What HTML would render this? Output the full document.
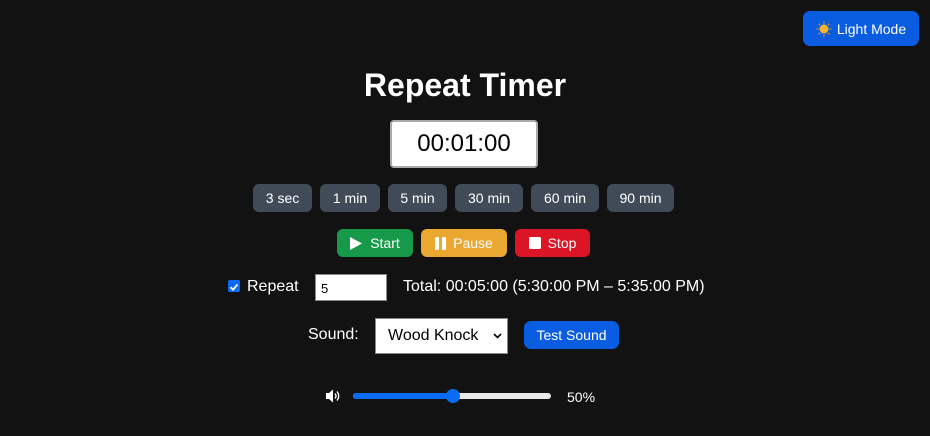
<!DOCTYPE html>
<html><head><style>
body{margin:0;width:930px;height:436px;background:#121212;font-family:"Liberation Sans",Arial,sans-serif;color:#fff;position:relative;overflow:hidden}
.a{position:absolute;box-sizing:border-box}
.btn{border-radius:6px;display:flex;align-items:center;justify-content:center;font-size:14px;color:#fff}
.p{background:#414b57;top:184px;height:28px}
.c{top:229px;height:28px;font-size:14px}
</style></head><body>
<div class="a btn" style="left:803px;top:11px;width:116px;height:35px;background:#0a5ce0;border-radius:7px;font-size:14px">
<svg width="16" height="16" style="margin-right:5px"><circle cx="8" cy="8" r="4.5" fill="#f7b52b"/><g stroke="#e98a2a" stroke-width="1.3"><path d="M8 0.5V2.5M8 13.5V15.5M0.5 8H2.5M13.5 8H15.5M2.7 2.7L4 4M12 12L13.3 13.3M2.7 13.3L4 12M12 4L13.3 2.7"/></g></svg>Light Mode</div>
<div class="a" style="left:0;width:930px;top:67px;text-align:center;font-size:32px;font-weight:bold">Repeat Timer</div>
<div class="a" style="left:390px;top:120px;width:148px;height:48px;background:#fff;border:2px solid #aaa;border-radius:4px;color:#000;font-size:24px;display:flex;align-items:center;justify-content:center">00:01:00</div>
<div class="a btn p" style="left:253px;width:59px">3 sec</div>
<div class="a btn p" style="left:320px;width:60px">1 min</div>
<div class="a btn p" style="left:388px;width:59px">5 min</div>
<div class="a btn p" style="left:455px;width:68px">30 min</div>
<div class="a btn p" style="left:531px;width:68px">60 min</div>
<div class="a btn p" style="left:607px;width:67px">90 min</div>
<div class="a btn c" style="left:337px;width:76px;background:#17994a"><svg width="12" height="13" style="margin-right:8px"><path d="M0 0L12 6.5L0 13Z" fill="#fff"/></svg>Start</div>
<div class="a btn c" style="left:421px;width:86px;background:#eba830"><svg width="11" height="13" style="margin-right:7px"><rect x="0" y="0" width="4" height="13" rx="1" fill="#fff"/><rect x="7" y="0" width="4" height="13" rx="1" fill="#fff"/></svg>Pause</div>
<div class="a btn c" style="left:515px;width:75px;background:#dc1526"><svg width="12" height="12" style="margin-right:7px"><rect width="12" height="12" rx="1.5" fill="#fff"/></svg>Stop</div>
<div class="a" style="left:228px;top:280px;width:12px;height:12px;background:#0a6cf5;border-radius:2px"><svg width="12" height="12"><path d="M2.5 6.2L5 8.7L9.5 3.5" stroke="#fff" stroke-width="1.8" fill="none"/></svg></div>
<div class="a" style="left:247px;top:278px;font-size:16px">Repeat</div>
<div class="a" style="left:315px;top:274px;width:72px;height:27px;background:#fff;border:1px solid #888;color:#000;font-size:13px;padding:6px 5px">5</div>
<div class="a" style="left:403px;top:278px;font-size:16px">Total: 00:05:00 (5:30:00 PM – 5:35:00 PM)</div>
<div class="a" style="left:308px;top:326px;font-size:16px">Sound:</div>
<div class="a" style="left:375px;top:318px;width:133px;height:36px;background:#fff;border:1px solid #888;color:#000;font-size:16px;padding:8px 12px">Wood Knock<svg style="position:absolute;right:5px;top:14px" width="9" height="6"><path d="M1 1L4.5 4.5L8 1" stroke="#000" stroke-width="1.6" fill="none"/></svg></div>
<div class="a btn" style="left:524px;top:321px;width:95px;height:28px;background:#0a5ce0;border-radius:7px">Test Sound</div>
<svg class="a" style="left:326px;top:389px" width="16" height="14"><path d="M0 4H3L7 0.5V13.5L3 10H0Z" fill="#fff"/><path d="M9 4.5Q11 7 9 9.5M11 2.5Q14.5 7 11 11.5" stroke="#fff" stroke-width="1.4" fill="none"/></svg>
<div class="a" style="left:353px;top:393px;width:198px;height:6px;background:#e8e8e8;border-radius:3px"></div>
<div class="a" style="left:353px;top:393px;width:100px;height:6px;background:#0a6cf5;border-radius:3px"></div>
<div class="a" style="left:446px;top:389px;width:14px;height:14px;background:#0a6cf5;border-radius:50%"></div>
<div class="a" style="left:567px;top:389px;font-size:14px">50%</div>
</body></html>
